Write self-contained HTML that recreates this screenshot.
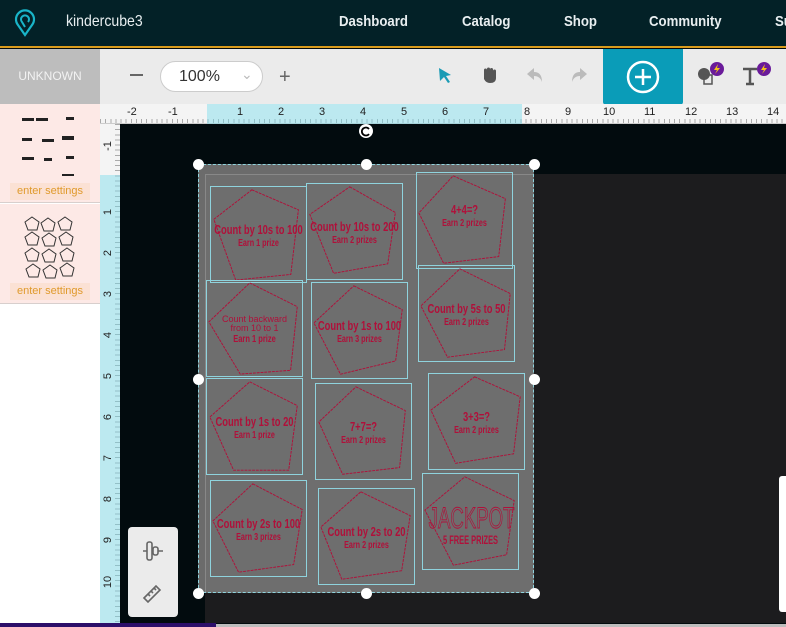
<!DOCTYPE html>
<html><head><meta charset="utf-8"><style>
*{box-sizing:border-box;margin:0;padding:0}
body{width:786px;height:627px;overflow:hidden;position:relative;background:#020b0e;font-family:"Liberation Sans",sans-serif}
.abs{position:absolute}
#nav{left:0;top:0;width:786px;height:48px;background:#032127;border-bottom:2px solid #d99b1c}
#nav .l{position:absolute;top:13px;color:#e8eef0;font-size:15px;font-weight:bold;transform:scaleX(0.88);transform-origin:0 0}
#tb{left:0;top:49px;width:786px;height:55px;background:#ebebeb}
#unk{left:0;top:49px;width:100px;height:55px;background:#bdbdbd;color:#f2f2f2;font-size:12px;line-height:55px;text-align:center}
#plus{left:603px;top:49px;width:80px;height:56px;background:#0a9cb8;border-radius:0 0 3px 3px}
#side{left:0;top:104px;width:100px;height:523px;background:#fff}
.card{position:absolute;left:0;width:100px;height:99px;background:#fde9e6;border-bottom:1px solid #d8cfcd}
.es{position:absolute;left:10px;width:80px;height:17px;background:#fbe1d4;color:#e09a2c;font-size:11px;text-align:center;line-height:17px}
#rtop{left:100px;top:104px;width:686px;height:20px;background:#f4f4f4;border-bottom:1px solid #ccc;
background-image:repeating-linear-gradient(90deg,#aaa 0 1px,transparent 1px 5.125px);background-size:100% 5px;background-repeat:no-repeat;background-position:0 15px}
#rleft{left:100px;top:124px;width:20px;height:503px;background:#f4f4f4;
background-image:repeating-linear-gradient(180deg,#aaa 0 1px,transparent 1px 5.125px);background-size:5px 100%;background-repeat:no-repeat;background-position:15px 0}
.n{position:absolute;font-size:11px;color:#222}
#bed{left:205px;top:174px;width:581px;height:449px;background:#1c1c1e}
#sel{left:198px;top:164px;width:336px;height:429px;background:#6b6b6b;border:1px dashed #8fd3dd}
.h{position:absolute;width:11px;height:11px;border-radius:50%;background:#fff;margin:-5.5px 0 0 -5.5px}
.p{position:absolute;width:97px;height:97px;border:1px solid #8fd3dd}
.p svg{position:absolute;left:0;top:0}
.p .t{position:absolute;left:-20px;right:-20px;top:36px;text-align:center;color:#b0103a;font-family:"Liberation Sans Narrow","Liberation Sans",sans-serif;font-size:13px;line-height:14px;transform:scaleX(0.72);font-weight:bold}
.p .t span{font-size:10px;display:block;line-height:13px}
</style></head><body>
<div id="nav" class="abs">
 <svg class="abs" style="left:14px;top:9px" width="22" height="28" viewBox="0 0 22 28"><path d="M11 26 L4 16 A9 9 0 1 1 18 16 Z" fill="none" stroke="#19b5c8" stroke-width="2.2"/><path d="M11 18 L8 13 A4 4 0 1 1 14 13" fill="none" stroke="#19b5c8" stroke-width="2"/></svg>
 <div class="l" style="left:66px;font-weight:normal;font-size:16px">kindercube3</div>
 <div class="l" style="left:339px">Dashboard</div>
 <div class="l" style="left:462px">Catalog</div>
 <div class="l" style="left:564px">Shop</div>
 <div class="l" style="left:649px">Community</div>
 <div class="l" style="left:775px">Su</div>
</div>
<div id="tb" class="abs"></div>
<div id="unk" class="abs">UNKNOWN</div>
<div class="abs" style="left:130px;top:74px;width:13px;height:2px;background:#666"></div>
<div class="abs" style="left:160px;top:61px;width:103px;height:31px;border:1px solid #ccc;border-radius:16px;background:#fff;font-size:16px;color:#333;padding:6px 0 0 18px">100%<span style="position:absolute;left:80px;top:4px;color:#bbb;font-size:14px">&#8964;</span></div>
<div class="abs" style="left:279px;top:66px;font-size:20px;color:#666">+</div>
<svg class="abs" style="left:437px;top:67px" width="16" height="17" viewBox="0 0 16 17"><path d="M2 1 L14 8 L9 9 L13 15 L11 16 L7 10 L3 14 Z" fill="#1a9bb5"/></svg>
<svg class="abs" style="left:481px;top:66px" width="17" height="18" viewBox="0 0 17 18"><path d="M3 8 V4 a1.5 1.5 0 0 1 3 0 V3 a1.5 1.5 0 0 1 3 0 V3.5 a1.5 1.5 0 0 1 3 0 V5 a1.5 1.5 0 0 1 3 0 V12 Q15 17 9 17 Q5 17 3 13 Z" fill="#555"/></svg>
<svg class="abs" style="left:526px;top:67px" width="18" height="16" viewBox="0 0 18 16"><path d="M8 1 L1 7 L8 13 V9 Q14 9 16 15 Q16 5 8 5 Z" fill="#bbb"/></svg>
<svg class="abs" style="left:570px;top:67px" width="18" height="16" viewBox="0 0 18 16"><path d="M10 1 L17 7 L10 13 V9 Q4 9 2 15 Q2 5 10 5 Z" fill="#bbb"/></svg>
<div id="plus" class="abs"><svg style="position:absolute;left:23px;top:11px" width="34" height="34" viewBox="0 0 34 34"><circle cx="17" cy="17" r="15" fill="none" stroke="#fff" stroke-width="2.5"/><path d="M17 9 V25 M9 17 H25" stroke="#fff" stroke-width="2.5"/></svg></div>
<svg class="abs" style="left:696px;top:61px" width="30" height="26" viewBox="0 0 30 26"><circle cx="8" cy="13" r="6" fill="#555"/><rect x="8" y="14" width="8" height="9" fill="none" stroke="#555" stroke-width="1.5"/><circle cx="21" cy="8" r="7" fill="#6a1b9a"/><path d="M22 3 L18 9 H21 L19 13 L24 7 H21 Z" fill="#f5c518"/></svg>
<svg class="abs" style="left:741px;top:61px" width="32" height="26" viewBox="0 0 32 26"><path d="M2 8 H16 M9 8 V23 M5 23 H13" stroke="#555" stroke-width="2.5" fill="none"/><circle cx="23" cy="8" r="7" fill="#6a1b9a"/><path d="M24 3 L20 9 H23 L21 13 L26 7 H23 Z" fill="#f5c518"/></svg>

<div id="side" class="abs">
 <div class="card" style="top:0"><svg style="position:absolute;left:20px;top:8px" width="60" height="64">
  <g fill="#222"><rect x="2" y="6" width="12" height="3"/><rect x="16" y="6" width="12" height="3"/><rect x="46" y="5" width="8" height="3"/>
  <rect x="2" y="26" width="10" height="3"/><rect x="22" y="27" width="12" height="3"/><rect x="42" y="24" width="12" height="4"/>
  <rect x="2" y="45" width="12" height="3"/><rect x="24" y="46" width="8" height="3"/><rect x="46" y="44" width="8" height="3"/>
  <rect x="2" y="65" width="10" height="3"/><rect x="22" y="65" width="12" height="3"/><rect x="42" y="62" width="12" height="6"/></g></svg>
  <div class="es" style="top:79px">enter settings</div></div>
 <div class="card" style="top:100px;height:100px"><svg style="position:absolute;left:24px;top:12px" width="54" height="64" viewBox="0 0 54 64" fill="none" stroke="#333" stroke-width="1">
  <g id="pg"><path d="M8 1 L15 6 L13 14 L4 14 L1 6 Z"/></g>
  <use href="#pg" x="16" y="1"/><use href="#pg" x="33" y="0"/>
  <use href="#pg" x="0" y="15"/><use href="#pg" x="17" y="16"/><use href="#pg" x="34" y="15"/>
  <use href="#pg" x="0" y="31"/><use href="#pg" x="17" y="32"/><use href="#pg" x="35" y="31"/>
  <use href="#pg" x="1" y="47"/><use href="#pg" x="18" y="48"/><use href="#pg" x="35" y="46"/></svg>
  <div class="es" style="top:79px">enter settings</div></div>
</div>

<div id="rtop" class="abs">
 <div class="abs" style="left:107px;top:0;width:315px;height:20px;background:rgba(120,220,235,0.45)"></div>
 <div class="n" style="left:27px;top:2px">-2</div><div class="n" style="left:68px;top:2px">-1</div>
 <div class="n" style="left:137px;top:2px">1</div><div class="n" style="left:178px;top:2px">2</div><div class="n" style="left:219px;top:2px">3</div><div class="n" style="left:260px;top:2px">4</div><div class="n" style="left:301px;top:2px">5</div><div class="n" style="left:342px;top:2px">6</div><div class="n" style="left:383px;top:2px">7</div><div class="n" style="left:424px;top:2px">8</div><div class="n" style="left:465px;top:2px">9</div><div class="n" style="left:503px;top:2px">10</div><div class="n" style="left:544px;top:2px">11</div><div class="n" style="left:585px;top:2px">12</div><div class="n" style="left:626px;top:2px">13</div><div class="n" style="left:667px;top:2px">14</div>
</div>
<div id="rleft" class="abs">
 <div class="abs" style="left:0;top:51px;width:20px;height:448px;background:rgba(120,220,235,0.45)"></div>
 <div class="n" style="left:3px;top:16px;transform:rotate(-90deg)">-1</div>
 <div class="n" style="left:5px;top:82px;transform:rotate(-90deg)">1</div><div class="n" style="left:5px;top:123px;transform:rotate(-90deg)">2</div><div class="n" style="left:5px;top:164px;transform:rotate(-90deg)">3</div><div class="n" style="left:5px;top:205px;transform:rotate(-90deg)">4</div><div class="n" style="left:5px;top:246px;transform:rotate(-90deg)">5</div><div class="n" style="left:5px;top:287px;transform:rotate(-90deg)">6</div><div class="n" style="left:5px;top:328px;transform:rotate(-90deg)">7</div><div class="n" style="left:5px;top:369px;transform:rotate(-90deg)">8</div><div class="n" style="left:5px;top:410px;transform:rotate(-90deg)">9</div><div class="n" style="left:2px;top:452px;transform:rotate(-90deg)">10</div>
 <div class="abs" style="left:0;top:499px;width:20px;height:4px;background:#fff"></div>
</div>

<div id="bed" class="abs"></div>
<div id="sel" class="abs"></div>
<div class="abs" style="left:205px;top:174px;width:328px;height:418px;border-top:1px solid #888;border-left:1px solid #888;background:#6e6e6e"></div>
<svg class="abs" style="left:358px;top:124px" width="16" height="16"><circle cx="8" cy="7" r="7" fill="#fff"/><path d="M11 5 A4 4 0 1 0 11 10" stroke="#000" stroke-width="1.8" fill="none"/></svg>

<div class="p" style="left:210px;top:186px"><svg width="95" height="95" viewBox="0 0 100 100"><path d="M43 3 L92 24 L84 92 L26 98 L3 34 Z" fill="none" stroke="#b0103a" stroke-dasharray="3 1"/></svg><div class="t">Count by 10s to 100<span>Earn 1 prize</span></div></div>
<div class="p" style="left:306px;top:183px"><svg width="95" height="95" viewBox="0 0 100 100"><path d="M45 3 L93 30 L85 84 L28 94 L3 32 Z" fill="none" stroke="#b0103a" stroke-dasharray="3 1"/></svg><div class="t">Count by 10s to 200<span>Earn 2 prizes</span></div></div>
<div class="p" style="left:416px;top:172px"><svg width="95" height="95" viewBox="0 0 100 100"><path d="M38 3 L93 27 L86 88 L28 95 L2 42 Z" fill="none" stroke="#b0103a" stroke-dasharray="3 1"/></svg><div class="t" style="top:30px">4+4=?<span>Earn 2 prizes</span></div></div>
<div class="p" style="left:206px;top:280px"><svg width="95" height="95" viewBox="0 0 100 100"><path d="M45 2 L95 27 L88 94 L35 98 L2 43 Z" fill="none" stroke="#b0103a" stroke-dasharray="3 1"/></svg><div class="t" style="top:34px;font-size:9px;line-height:9px;transform:none;font-weight:normal">Count backward<br>from 10 to 1<span style="font-size:10px;line-height:13px;font-weight:bold;transform:scaleX(0.75)">Earn 1 prize</span></div></div>
<div class="p" style="left:311px;top:282px"><svg width="95" height="95" viewBox="0 0 100 100"><path d="M44 3 L95 28 L88 82 L30 96 L2 42 Z" fill="none" stroke="#b0103a" stroke-dasharray="3 1"/></svg><div class="t">Count by 1s to 100<span>Earn 3 prizes</span></div></div>
<div class="p" style="left:418px;top:265px"><svg width="95" height="95" viewBox="0 0 100 100"><path d="M43 3 L96 29 L90 88 L30 96 L2 42 Z" fill="none" stroke="#b0103a" stroke-dasharray="3 1"/></svg><div class="t">Count by 5s to 50<span>Earn 2 prizes</span></div></div>
<div class="p" style="left:206px;top:378px"><svg width="95" height="95" viewBox="0 0 100 100"><path d="M45 3 L95 28 L86 96 L28 96 L3 40 Z" fill="none" stroke="#b0103a" stroke-dasharray="3 1"/></svg><div class="t">Count by 1s to 20<span>Earn 1 prize</span></div></div>
<div class="p" style="left:315px;top:383px"><svg width="95" height="95" viewBox="0 0 100 100"><path d="M42 3 L94 28 L88 88 L28 95 L3 40 Z" fill="none" stroke="#b0103a" stroke-dasharray="3 1"/></svg><div class="t">7+7=?<span>Earn 2 prizes</span></div></div>
<div class="p" style="left:428px;top:373px"><svg width="95" height="95" viewBox="0 0 100 100"><path d="M48 3 L96 24 L89 84 L28 94 L2 38 Z" fill="none" stroke="#b0103a" stroke-dasharray="3 1"/></svg><div class="t">3+3=?<span>Earn 2 prizes</span></div></div>
<div class="p" style="left:210px;top:480px"><svg width="95" height="95" viewBox="0 0 100 100"><path d="M44 3 L96 30 L87 88 L29 96 L2 42 Z" fill="none" stroke="#b0103a" stroke-dasharray="3 1"/></svg><div class="t">Count by 2s to 100<span>Earn 3 prizes</span></div></div>
<div class="p" style="left:318px;top:488px"><svg width="95" height="95" viewBox="0 0 100 100"><path d="M44 3 L96 28 L87 86 L24 95 L2 40 Z" fill="none" stroke="#b0103a" stroke-dasharray="3 1"/></svg><div class="t">Count by 2s to 20<span>Earn 2 prizes</span></div></div>
<div class="p" style="left:422px;top:473px"><svg width="95" height="95" viewBox="0 0 100 100"><path d="M44 3 L96 28 L88 85 L32 96 L2 38 Z" fill="none" stroke="#b0103a" stroke-dasharray="3 1"/></svg><div class="t" style="top:30px;font-size:30px;line-height:30px;transform:scaleX(0.62);font-weight:normal;color:transparent;-webkit-text-stroke:0.9px #b0103a">JACKPOT<span style="font-size:12px;line-height:12px;color:#b0103a;-webkit-text-stroke:0;font-weight:bold">5 FREE PRIZES</span></div></div>

<div class="h" style="left:198px;top:164px"></div><div class="h" style="left:366px;top:164px"></div><div class="h" style="left:534px;top:164px"></div>
<div class="h" style="left:198px;top:379px"></div><div class="h" style="left:534px;top:379px"></div>
<div class="h" style="left:198px;top:593px"></div><div class="h" style="left:366px;top:593px"></div><div class="h" style="left:534px;top:593px"></div>

<div class="abs" style="left:128px;top:527px;width:50px;height:90px;background:#ebebeb;border-radius:4px">
 <svg style="position:absolute;left:13px;top:12px" width="24" height="24" viewBox="0 0 24 24" fill="none" stroke="#666" stroke-width="1.6"><rect x="6" y="3" width="5" height="18" rx="2"/><rect x="12" y="8" width="5" height="8" rx="2"/><path d="M2 12 H6 M17 12 H22"/></svg>
 <svg style="position:absolute;left:13px;top:56px" width="22" height="22" viewBox="0 0 22 22" fill="none" stroke="#666" stroke-width="1.6"><path d="M3 15 L15 3 L19 7 L7 19 Z M7 11 L9 13 M10 8 L12 10 M13 5 L15 7"/></svg>
</div>
<div class="abs" style="left:779px;top:476px;width:10px;height:136px;background:#fff;border-radius:3px"></div>
<div class="abs" style="left:0;top:623px;width:216px;height:4px;background:#2d0f6a"></div>
<div class="abs" style="left:216px;top:624px;width:570px;height:3px;background:#bdbdbd"></div>
</body></html>
